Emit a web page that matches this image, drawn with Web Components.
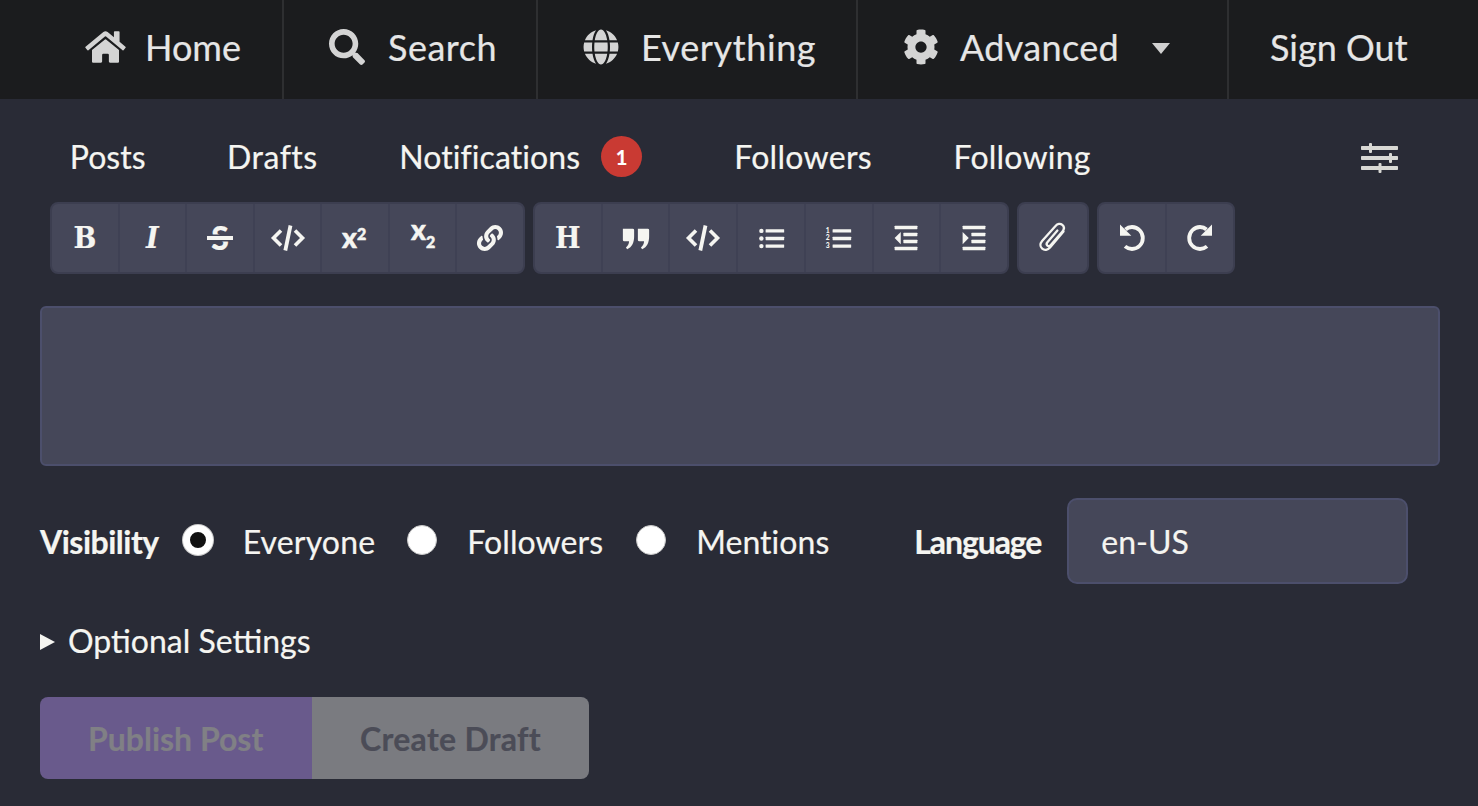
<!DOCTYPE html>
<html lang="en">
<head>
<meta charset="utf-8">
<title>Post editor</title>
<style>
  html, body { margin: 0; background: #292b36; }
  body { font-family: Lato, "Liberation Sans", sans-serif; color: #f5f5f1; height: 806px; overflow: hidden; -webkit-text-stroke: .2px; }
</style>
</head>
<body>
<top-nav>
  <nav-item icon="home" style="--w:244px;--pl:45px;--gap:19px;--icon-w:41px">Home</nav-item>
  <nav-item icon="search" style="--w:254px;--pl:45px;--gap:23px;--ls:.5px">Search</nav-item>
  <nav-item icon="globe" style="--w:320px;--pl:45px;--gap:22px;--ls:.6px">Everything</nav-item>
  <nav-item icon="cog" caret style="--w:371px;--pl:45px;--gap:21px;--ls:.35px">Advanced</nav-item>
  <nav-item last style="--w:240px;--pl:41px">Sign Out</nav-item>
</top-nav>
<post-tabs>
  <post-tab>Posts</post-tab>
  <post-tab style="--ls:.5px">Drafts</post-tab>
  <post-tab badge="1" style="--ls:.08px">Notifications</post-tab>
  <post-tab style="--ls:.3px">Followers</post-tab>
  <post-tab style="--ls:.22px">Following</post-tab>
</post-tabs>
<edit-toolbar>
  <tool-group style="--w:475px">
    <tool-btn letter="B"></tool-btn>
    <tool-btn letter="I" italic></tool-btn>
    <tool-btn letter="S" strike></tool-btn>
    <tool-btn icon="code"></tool-btn>
    <tool-btn icon="sup"></tool-btn>
    <tool-btn icon="sub"></tool-btn>
    <tool-btn icon="link" size="26"></tool-btn>
  </tool-group>
  <tool-group style="--w:476px">
    <tool-btn letter="H"></tool-btn>
    <tool-btn icon="quote" size="30"></tool-btn>
    <tool-btn icon="code"></tool-btn>
    <tool-btn icon="ul" size="27"></tool-btn>
    <tool-btn icon="ol" size="27"></tool-btn>
    <tool-btn icon="outdent" size="28"></tool-btn>
    <tool-btn icon="indent" size="28"></tool-btn>
  </tool-group>
  <tool-group style="--w:72px">
    <tool-btn icon="clip"></tool-btn>
  </tool-group>
  <tool-group style="--w:138px">
    <tool-btn icon="undo"></tool-btn>
    <tool-btn icon="redo"></tool-btn>
  </tool-group>
</edit-toolbar>
<post-editor></post-editor>
<post-options>
  <radio-opt checked style="--ls:.15px">Everyone</radio-opt>
  <radio-opt style="--gap-left:32px;--ls:.1px">Followers</radio-opt>
  <radio-opt style="--gap-left:33px;--ls:.05px">Mentions</radio-opt>
</post-options>
<optional-settings>Optional Settings</optional-settings>
<post-actions>
  <action-btn primary>Publish Post</action-btn>
  <action-btn>Create Draft</action-btn>
</post-actions>

<script>
const ICONS = {
  home: ['0 0 576 512', '<path d="M280.37 148.26L96 300.11V464a16 16 0 0 0 16 16l112.06-.29a16 16 0 0 0 15.92-16V368a16 16 0 0 1 16-16h64a16 16 0 0 1 16 16v95.64a16 16 0 0 0 16 16.05L464 480a16 16 0 0 0 16-16V300L295.67 148.26a12.19 12.19 0 0 0-15.3 0zM571.6 251.47L488 182.56V44.05a12 12 0 0 0-12-12h-56a12 12 0 0 0-12 12v72.61L318.47 43a48 48 0 0 0-61 0L4.34 251.47a12 12 0 0 0-1.6 16.9l25.5 31A12 12 0 0 0 45.15 301l235.22-193.74a12.19 12.19 0 0 1 15.3 0L530.9 301a12 12 0 0 0 16.9-1.6l25.5-31a12 12 0 0 0-1.7-16.93z"/>'],
  search: ['0 0 512 512', '<path d="M505 442.7L405.3 343c-4.5-4.5-10.6-7-17-7H372c27.6-35.3 44-79.7 44-128C416 93.1 322.9 0 208 0S0 93.1 0 208s93.1 208 208 208c48.3 0 92.7-16.4 128-44v16.3c0 6.4 2.5 12.5 7 17l99.7 99.7c9.4 9.4 24.6 9.4 33.9 0l28.3-28.3c9.4-9.4 9.4-24.6.1-34zM208 336c-70.7 0-128-57.2-128-128 0-70.7 57.2-128 128-128 70.7 0 128 57.2 128 128 0 70.7-57.2 128-128 128z"/>'],
  globe: ['0 0 496 512', '<path d="M336.5 160C322 70.7 287.8 8 248 8s-74 62.7-88.5 152h177zM152 256c0 22.2 1.2 43.5 3.3 64h185.3c2.1-20.5 3.3-41.8 3.3-64s-1.2-43.5-3.3-64H155.3c-2.1 20.5-3.3 41.8-3.3 64zm324.7-96c-28.6-67.9-86.5-120.4-158-141.6 24.4 33.8 41.2 84.7 50 141.6h108zM177.2 18.4C105.8 39.6 47.8 92.1 19.3 160h108c8.7-56.9 25.5-107.8 49.9-141.6zM487.4 192H372.7c2.1 21 3.3 42.5 3.3 64s-1.2 43-3.3 64h114.6c5.5-20.5 8.6-41.8 8.6-64s-3.1-43.5-8.5-64zM120 256c0-21.5 1.2-43 3.3-64H8.6C3.2 212.5 0 233.8 0 256s3.2 43.5 8.6 64h114.6c-2-21-3.2-42.5-3.2-64zm39.5 96c14.5 89.3 48.7 152 88.5 152s74-62.7 88.5-152h-177zm159.3 141.6c71.4-21.2 129.4-73.7 158-141.6h-108c-8.8 56.9-25.6 107.8-50 141.6zM19.3 352c28.6 67.9 86.5 120.4 158 141.6-24.4-33.8-41.2-84.7-50-141.6h-108z"/>'],
  cog: ['0 0 512 512', '<path d="M487.4 315.7l-42.6-24.6c4.3-23.2 4.3-47 0-70.2l42.6-24.6c4.9-2.8 7.1-8.6 5.5-14-11.1-35.6-30-67.8-54.7-94.6-3.8-4.1-10-5.1-14.8-2.3L380.8 110c-17.9-15.4-38.5-27.3-60.8-35.1V25.8c0-5.6-3.9-10.5-9.4-11.7-36.7-8.2-74.3-7.8-109.2 0-5.5 1.2-9.4 6.1-9.4 11.7V75c-22.2 7.9-42.8 19.8-60.8 35.1L88.7 85.5c-4.9-2.8-11-1.9-14.8 2.3-24.7 26.7-43.6 58.9-54.7 94.6-1.7 5.4.6 11.2 5.5 14L67.3 221c-4.3 23.2-4.3 47 0 70.2l-42.6 24.6c-4.9 2.8-7.1 8.6-5.5 14 11.1 35.6 30 67.8 54.7 94.6 3.8 4.1 10 5.1 14.8 2.3l42.6-24.6c17.9 15.4 38.5 27.3 60.8 35.1v49.2c0 5.6 3.9 10.5 9.4 11.7 36.7 8.2 74.3 7.8 109.2 0 5.5-1.2 9.4-6.1 9.4-11.7v-49.2c22.2-7.9 42.8-19.8 60.8-35.1l42.6 24.6c4.9 2.8 11 1.9 14.8-2.3 24.7-26.7 43.6-58.9 54.7-94.6 1.5-5.5-.7-11.3-5.6-14.1zM256 336c-44.1 0-80-35.9-80-80s35.9-80 80-80 80 35.9 80 80-35.9 80-80 80z"/>'],
  link: ['0 0 512 512', '<path d="M326.612 185.391c59.747 59.809 58.927 155.698.36 214.59-.11.12-.24.25-.36.37l-67.2 67.2c-59.27 59.27-155.699 59.262-214.96 0-59.27-59.26-59.27-155.7 0-214.96l37.106-37.106c9.84-9.84 26.786-3.3 27.294 10.606.648 17.722 3.826 35.527 9.69 52.721 1.986 5.822.567 12.262-3.783 16.612l-13.087 13.087c-28.026 28.026-28.905 73.66-1.155 101.96 28.024 28.579 74.086 28.749 102.325.51l67.2-67.19c28.191-28.191 28.073-73.757 0-101.83-3.701-3.694-7.429-6.564-10.341-8.569a16.037 16.037 0 0 1-6.947-12.606c-.396-10.567 3.348-21.456 11.698-29.806l21.054-21.055c5.521-5.521 14.182-6.199 20.584-1.731a152.482 152.482 0 0 1 20.522 17.197zM467.547 44.449c-59.261-59.262-155.69-59.27-214.96 0l-67.2 67.2c-.12.12-.25.25-.36.37-58.566 58.892-59.387 154.781.36 214.59a152.454 152.454 0 0 0 20.521 17.196c6.402 4.468 15.064 3.789 20.584-1.731l21.054-21.055c8.35-8.35 12.094-19.239 11.698-29.806a16.037 16.037 0 0 0-6.947-12.606c-2.912-2.005-6.64-4.875-10.341-8.569-28.073-28.073-28.191-73.639 0-101.83l67.2-67.19c28.239-28.239 74.3-28.069 102.325.51 27.75 28.3 26.872 73.934-1.155 101.96l-13.087 13.087c-4.35 4.35-5.769 10.79-3.783 16.612 5.864 17.194 9.042 34.999 9.69 52.721.509 13.906 17.454 20.446 27.294 10.606l37.106-37.106c59.271-59.259 59.271-155.699.001-214.959z"/>'],
  // the toolbar ones are hand drawn on a 32 grid
  sliders: ['0 0 37 30', '<rect y="3" width="37" height="4" rx=".8"/><rect y="13" width="37" height="4" rx=".8"/><rect y="23" width="37" height="4" rx=".8"/><rect x="8" y="0" width="3" height="10" rx="1"/><rect x="28" y="10" width="3" height="10" rx="1"/><rect x="17.500" y="20" width="3" height="10" rx="1"/>'],
  code: ['0 0 32 32', '<path d="M9 8.5l-7.5 7.5L9 23.500" fill="none" stroke="currentColor" stroke-width="3.6"/><path d="M23 8.500l7.500 7.500-7.500 7.500" fill="none" stroke="currentColor" stroke-width="3.600"/><path d="M18.500 3.500L13.300 28.500" fill="none" stroke="currentColor" stroke-width="3.800"/>'],
  sup: ['0 0 32 32', '<text x="3" y="26" font-size="28" font-weight="900" stroke="currentColor" stroke-width=".5" font-family="Lato, sans-serif">x</text><text x="18" y="18" font-size="16" font-weight="900" stroke="currentColor" stroke-width=".5" font-family="Lato, sans-serif">2</text>'],
  sub: ['0 0 32 32', '<text x="4" y="18" font-size="28" font-weight="900" stroke="currentColor" stroke-width=".5" font-family="Lato, sans-serif">x</text><text x="19" y="26" font-size="16" font-weight="900" stroke="currentColor" stroke-width=".5" font-family="Lato, sans-serif">2</text>'],
  quote: ['0 0 32 32', '<path d="M2 6h10.500a1.500 1.500 0 0 1 1.500 1.500v7c0 6-2 11.500-7.500 13.500l-1.200-2c2.400-1.600 3.200-4 3.300-6.500H3.500A1.500 1.500 0 0 1 2 18zM18 6h10.500A1.500 1.500 0 0 1 30 7.500v7c0 6-2 11.500-7.500 13.500l-1.200-2c2.400-1.600 3.200-4 3.300-6.500h-5.100a1.500 1.500 0 0 1-1.500-1.500z"/>'],
  ul: ['0 0 32 32', '<circle cx="4" cy="7" r="2.600"/><circle cx="4" cy="16" r="2.600"/><circle cx="4" cy="25" r="2.600"/><rect x="9" y="5" width="22" height="4" rx=".5"/><rect x="9" y="14" width="22" height="4" rx=".5"/><rect x="9" y="23" width="22" height="4" rx=".5"/>'],
  ol: ['0 0 32 32', '<text x="1" y="9.500" font-size="8" font-weight="900" font-family="Lato, sans-serif">1</text><text x="1" y="18" font-size="8" font-weight="900" font-family="Lato, sans-serif">2</text><text x="1" y="27" font-size="8" font-weight="900" font-family="Lato, sans-serif">3</text><rect x="9" y="5" width="22" height="4" rx=".5"/><rect x="9" y="14" width="22" height="4" rx=".5"/><rect x="9" y="23" width="22" height="4" rx=".5"/>'],
  outdent: ['0 0 32 32', '<rect x="3" y="2" width="26" height="4" rx=".5"/><rect x="13" y="10" width="16" height="4" rx=".5"/><rect x="13" y="18" width="16" height="4" rx=".5"/><rect x="3" y="26" width="26" height="4" rx=".5"/><path d="M10 9v14l-7-7z"/>'],
  indent: ['0 0 32 32', '<rect x="3" y="2" width="26" height="4" rx=".5"/><rect x="13" y="10" width="16" height="4" rx=".5"/><rect x="13" y="18" width="16" height="4" rx=".5"/><rect x="3" y="26" width="26" height="4" rx=".5"/><path d="M3 9v14l7-7z"/>'],
  clip: ['0 0 32 32', '<path d="M26.500 9.500L13 25.500c-2.200 2.600-5.500 3.200-7.800 1.200-2.300-2-2.300-5.200-.1-7.800L18.500 4c2-2.400 4.800-2.800 6.800-1.100 2 1.700 2 4.400 0 6.800L13.800 23c-1 1.200-2.400 1.500-3.400.6-1-.9-1-2.200 0-3.400l10-11.700" fill="none" stroke="currentColor" stroke-width="2.300" stroke-linecap="round"/>'],
  undo: ['0 0 32 32', '<path d="M9.500 7.500C11.200 5.900 13.400 5 16 5c6 0 10.800 4.900 10.800 11S22 27 16 27c-2.700 0-5.100-1-7-2.600" fill="none" stroke="currentColor" stroke-width="3.800"/><path d="M4 2.500v11.300h11.300z"/>'],
  redo: ['0 0 32 32', '<path d="M22.500 7.500C20.800 5.900 18.600 5 16 5 10 5 5.200 9.900 5.200 16S10 27 16 27c2.700 0 5.100-1 7-2.600" fill="none" stroke="currentColor" stroke-width="3.800"/><path d="M28 2.500v11.300H16.700z"/>']
};

class UiIcon extends HTMLElement {
  connectedCallback() {
    const [box, body] = ICONS[this.getAttribute('name')];
    const root = this.attachShadow({ mode: 'open' });
    root.innerHTML = `
      <style>
        :host { display: inline-flex; color: inherit; }
        svg { display: block; width: var(--iw, 36px); height: var(--ih, 36px); fill: currentColor; overflow: visible; }
      </style>
      <svg viewBox="${box}" aria-hidden="true">${body}</svg>`;
  }
}
customElements.define('ui-icon', UiIcon);

class TopNav extends HTMLElement {
  connectedCallback() {
    this.attachShadow({ mode: 'open' }).innerHTML = `
      <style>
        :host { display: flex; height: 99px; background: #1b1c1e; padding-left: 40px; }
      </style>
      <slot></slot>`;
  }
}
customElements.define('top-nav', TopNav);

class NavItem extends HTMLElement {
  connectedCallback() {
    const name = this.getAttribute('icon');
    const icon = name ? `<ui-icon name="${name}"></ui-icon>` : '';
    const caret = this.hasAttribute('caret') ? '<span class="caret"></span>' : '';
    this.attachShadow({ mode: 'open' }).innerHTML = `
      <style>
        :host {
          display: flex; align-items: center; box-sizing: border-box; flex: none;
          width: var(--w); padding: 0 0 6px var(--pl); color: #e6e6e6;
          border-right: 2px solid #2e2f31;
          font-size: 36px; letter-spacing: var(--ls, 0);
        }
        :host([last]) { border-right: 0; }
        ui-icon { margin-right: var(--gap); color: #d4d4d4; --iw: var(--icon-w, 36px); }
        .caret {
          margin-left: 33px; width: 0; height: 0; position: relative; top: 2px;
          border: 9.500px solid transparent; border-top: 11px solid #d0d0d0; border-bottom: 0;
        }
      </style>
      ${icon}<slot></slot>${caret}`;
  }
}
customElements.define('nav-item', NavItem);

class PostTabs extends HTMLElement {
  connectedCallback() {
    this.attachShadow({ mode: 'open' }).innerHTML = `
      <style>
        :host { display: flex; align-items: center; box-sizing: border-box; height: 103px; padding: 12px 80px 0 29px; }
        .tune { margin-left: auto; color: #d8d8d4; --iw: 37px; --ih: 30px; position: relative; top: 1px; }
      </style>
      <slot></slot>
      <ui-icon class="tune" name="sliders"></ui-icon>`;
  }
}
customElements.define('post-tabs', PostTabs);

class PostTab extends HTMLElement {
  connectedCallback() {
    const n = this.getAttribute('badge');
    this.attachShadow({ mode: 'open' }).innerHTML = `
      <style>
        :host { display: flex; align-items: center; padding: 0 40.800px; font-size: 32px; color: #f5f5f1; letter-spacing: var(--ls, 0); }
        .badge {
          display: flex; align-items: center; justify-content: center;
          width: 41px; height: 41px; border-radius: 50%; margin: 0 10.400px 0 21px;
          background: #c93a33; color: #fff; font-size: 20px; font-weight: 700;
        }
      </style>
      <slot></slot>${n ? `<span class="badge">${n}</span>` : ''}`;
  }
}
customElements.define('post-tab', PostTab);

class EditToolbar extends HTMLElement {
  connectedCallback() {
    this.attachShadow({ mode: 'open' }).innerHTML = `
      <style>:host { display: flex; gap: 8px; padding-left: 50px; }</style>
      <slot></slot>`;
  }
}
customElements.define('edit-toolbar', EditToolbar);

class ToolGroup extends HTMLElement {
  connectedCallback() {
    this.attachShadow({ mode: 'open' }).innerHTML = `
      <style>
        :host {
          display: flex; box-sizing: border-box; width: var(--w); height: 72px;
          background: #454759; border: 2px solid #3c3e50; border-radius: 8px;
        }
      </style>
      <slot></slot>`;
  }
}
customElements.define('tool-group', ToolGroup);

class ToolBtn extends HTMLElement {
  connectedCallback() {
    const name = this.getAttribute('icon');
    const letter = this.getAttribute('letter');
    const size = this.getAttribute('size') || 32;
    const inner = name
      ? `<ui-icon name="${name}" style="--iw:${size}px;--ih:${size}px"></ui-icon>`
      : `<span class="ltr">${letter}</span>`;
    this.attachShadow({ mode: 'open' }).innerHTML = `
      <style>
        :host {
          flex: 1; display: flex; align-items: center; justify-content: center;
          color: #f5f5f1; border-left: 2px solid #3f4154;
        }
        :host(:first-child) { border-left: 0; }
        .ltr { position: relative; font: 700 30px/1 "DejaVu Serif Condensed", "DejaVu Serif", serif; }
        :host([italic]) .ltr { font-style: italic; }
        :host([strike]) .ltr { font: 900 32px/1 Lato, sans-serif; }
        :host([strike]) .ltr::after {
          content: ""; position: absolute; left: -4px; right: -4px; top: 14px; height: 4px;
          background: #f5f5f1; box-shadow: 0 0 0 1.500px #454759;
        }
      </style>
      ${inner}`;
  }
}
customElements.define('tool-btn', ToolBtn);

class PostEditor extends HTMLElement {
  connectedCallback() {
    this.attachShadow({ mode: 'open' }).innerHTML = `
      <style>
        :host {
          display: block; box-sizing: border-box; height: 160px; margin: 32px 38px 0 40px;
          background: #454759; border: 2px solid #4c4f6c; border-radius: 6px;
        }
      </style>`;
  }
}
customElements.define('post-editor', PostEditor);

class PostOptions extends HTMLElement {
  connectedCallback() {
    this.attachShadow({ mode: 'open' }).innerHTML = `
      <style>
        :host { display: flex; align-items: center; height: 86px; margin: 32px 70px 0 40px; font-size: 32px; }
        b { font-weight: 700; flex: none; }
        .vis { margin-right: 24px; letter-spacing: -.5px; }
        .lang { margin-left: 85px; margin-right: 26px; letter-spacing: -1.100px; }
        .input {
          box-sizing: border-box; flex: none; width: 341px; height: 86px; padding: 0 32px; display: flex; align-items: center;
          background: #454759; border: 2px solid #4c4f6c; border-radius: 10px;
        }
      </style>
      <b class="vis">Visibility</b>
      <slot></slot>
      <b class="lang">Language</b>
      <div class="input">en-US</div>`;
  }
}
customElements.define('post-options', PostOptions);

class RadioOpt extends HTMLElement {
  connectedCallback() {
    this.attachShadow({ mode: 'open' }).innerHTML = `
      <style>
        :host { display: flex; align-items: center; margin-left: var(--gap-left, 0); letter-spacing: var(--ls, 0); }
        .dot {
          box-sizing: border-box; width: 30px; height: 30px; border-radius: 50%; margin-right: 30px;
          background: #fff; border: 1px solid #c9c9c9; position: relative; top: -1px;
        }
        :host([checked]) .dot { border: 7.500px solid #fff; background: #111; box-shadow: 0 0 0 1px #c9c9c9; }
      </style>
      <span class="dot"></span><slot></slot>`;
  }
}
customElements.define('radio-opt', RadioOpt);

class OptionalSettings extends HTMLElement {
  connectedCallback() {
    this.attachShadow({ mode: 'open' }).innerHTML = `
      <style>
        :host { display: flex; align-items: center; height: 40px; margin: 36px 0 0 40px; font-size: 32px; }
        .tri {
          width: 0; height: 0; margin-right: 13px; position: relative; top: 2px;
          border-left: 15px solid #f5f5f1; border-top: 8px solid transparent; border-bottom: 8px solid transparent;
        }
      </style>
      <span class="tri"></span><slot></slot>`;
  }
}
customElements.define('optional-settings', OptionalSettings);

class PostActions extends HTMLElement {
  connectedCallback() {
    this.attachShadow({ mode: 'open' }).innerHTML = `
      <style>:host { display: flex; margin: 37px 0 0 40px; }</style>
      <slot></slot>`;
  }
}
customElements.define('post-actions', PostActions);

class ActionBtn extends HTMLElement {
  connectedCallback() {
    this.attachShadow({ mode: 'open' }).innerHTML = `
      <style>
        :host {
          display: flex; align-items: center; box-sizing: border-box; width: 277px; height: 82px; padding-left: 48px;
          font-size: 32px; font-weight: 700; letter-spacing: .3px; background: #7a7b80; color: #4b4c57;
          border-radius: 0 8px 8px 0;
        }
        :host([primary]) { width: 272px; letter-spacing: 0; background: #695a8c; color: #808085; border-radius: 8px 0 0 8px; }
      </style>
      <slot></slot>`;
  }
}
customElements.define('action-btn', ActionBtn);
</script>
</body>
</html>
